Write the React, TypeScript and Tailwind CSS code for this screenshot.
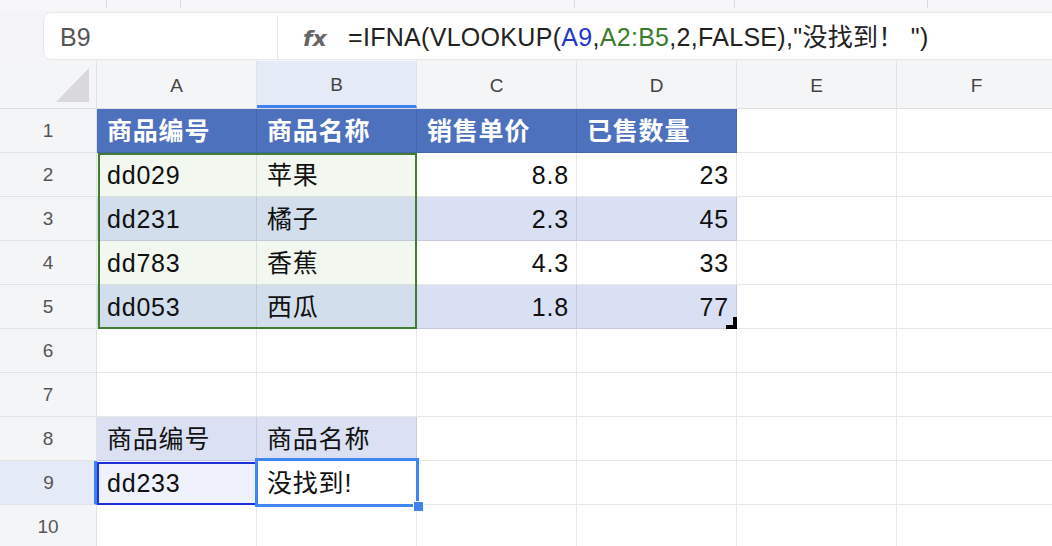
import React from "react";

type Cell = {
  t?: string;
  cls?: string;
  right?: boolean;
};

const FONT = { fontFamily: '"Liberation Sans", "Noto Sans CJK SC", sans-serif' };

const HDR = "bg-[#4e71be] text-white font-bold";
const GREEN = "bg-[#f2f7ef]";
const STEEL = "bg-[#d3deec]";
const LAV = "bg-[#dae0f3]";

const rows: { n: number; cells: Cell[]; sel?: boolean }[] = [
  {
    n: 1,
    cells: [
      { t: "商品编号", cls: HDR },
      { t: "商品名称", cls: HDR },
      { t: "销售单价", cls: HDR },
      { t: "已售数量", cls: HDR },
      {},
      {},
    ],
  },
  {
    n: 2,
    cells: [
      { t: "dd029", cls: GREEN },
      { t: "苹果", cls: GREEN },
      { t: "8.8", right: true },
      { t: "23", right: true },
      {},
      {},
    ],
  },
  {
    n: 3,
    cells: [
      { t: "dd231", cls: STEEL },
      { t: "橘子", cls: STEEL },
      { t: "2.3", right: true, cls: LAV },
      { t: "45", right: true, cls: LAV },
      {},
      {},
    ],
  },
  {
    n: 4,
    cells: [
      { t: "dd783", cls: GREEN },
      { t: "香蕉", cls: GREEN },
      { t: "4.3", right: true },
      { t: "33", right: true },
      {},
      {},
    ],
  },
  {
    n: 5,
    cells: [
      { t: "dd053", cls: STEEL },
      { t: "西瓜", cls: STEEL },
      { t: "1.8", right: true, cls: LAV },
      { t: "77", right: true, cls: LAV },
      {},
      {},
    ],
  },
  { n: 6, cells: [{}, {}, {}, {}, {}, {}] },
  { n: 7, cells: [{}, {}, {}, {}, {}, {}] },
  {
    n: 8,
    cells: [
      { t: "商品编号", cls: "bg-[#dbe1f2]" },
      { t: "商品名称", cls: "bg-[#dbe1f2]" },
      {},
      {},
      {},
      {},
    ],
  },
  {
    n: 9,
    sel: true,
    cells: [{ t: "dd233", cls: "bg-[#eff1fd]" }, { t: "没找到!" }, {}, {}, {}, {}],
  },
  { n: 10, cells: [{}, {}, {}, {}, {}, {}] },
];

const cols = ["A", "B", "C", "D", "E", "F"];
const stripWidths = [107, 74, 394, 160, 193, 200];

export default function App() {
  return (
    <div className="w-[1052px] h-[546px] overflow-hidden bg-white text-[#111]" style={FONT}>
      {/* top strip */}
      <div className="flex h-[10px] bg-[#f7f7f9]">
        {stripWidths.map((w, i) => (
          <div key={i} className="h-[8px] shrink-0 border-r border-[#dcdcdc]" style={{ width: w }} />
        ))}
      </div>
      {/* formula bar */}
      <div className="h-[51px] bg-[#f5f5f7] pl-[43px] pt-[2px]">
        <div className="flex h-[48px] w-[1030px] items-center rounded-[8px] border border-[#e9e9ec] bg-white pt-[4px]">
          <div className="flex h-full w-[234px] items-center border-r border-[#e6e6e8] pl-[16px] text-[25px] text-[#555]">
            B9
          </div>
          <div
            className="ml-[25px] w-[24px] text-[22px] font-bold italic text-[#666]"
            style={{ fontFamily: '"DejaVu Sans", sans-serif' }}
          >
            fx
          </div>
          <div className="ml-[21px] whitespace-nowrap text-[25px] tracking-[0.3px] text-[#222]">
            =IFNA(VLOOKUP(<span className="text-[#2436d0]">A9</span>,
            <span className="text-[#3b7d2c]">A2:B5</span>,2,FALSE),"没找到！ ")
          </div>
        </div>
      </div>
      {/* grid */}
      <div className="relative">
        {/* column header */}
        <div className="flex h-[48px] bg-[#f4f5f7] border-b border-[#dedede]">
          <div className="flex w-[97px] shrink-0 items-end justify-end border-r border-[#e2e2e2] pb-[6px] pr-[7px]">
            <svg width="33" height="34" viewBox="0 0 33 34">
              <polygon points="33,0 33,34 0,34" fill="#d9d9db" />
            </svg>
          </div>
          {cols.map((c) => (
            <div
              key={c}
              className={
                "flex w-[160px] shrink-0 items-center justify-center border-r border-[#e2e2e2] pt-[4px] text-[19px] text-[#444] " +
                (c === "B" ? "bg-[#e5ebf6] border-b-[3px] border-b-[#3d82ee]" : "")
              }
            >
              {c}
            </div>
          ))}
        </div>
        {rows.map((r) => (
          <div key={r.n} className="flex h-[44px]">
            <div
              className={
                "flex w-[97px] shrink-0 items-center justify-center border-b border-r border-[#e2e2e2] pt-[2px] text-[19px] text-[#555] " +
                (r.sel ? "bg-[#e5ebf6] border-r-[3px] border-r-[#3d82ee] pl-[3px]" : "bg-[#f4f5f7]")
              }
            >
              {r.n}
            </div>
            {r.cells.map((c, i) => (
              <div
                key={i}
                className={
                  "flex w-[160px] shrink-0 items-center border-b border-r border-black/[0.09] pt-[2px] text-[25px] tracking-[0.8px] " +
                  (c.right ? "justify-end pr-[7px] " : "pl-[10px] ") +
                  (c.cls ?? "bg-white")
                }
              >
                {c.t}
              </div>
            ))}
          </div>
        ))}
        {/* A2:B5 green range outline */}
        <div className="pointer-events-none absolute left-[98px] top-[92px] h-[176px] w-[319px] border-2 border-[#3f7d32]" />
        {/* D5 fill corner */}
        <div className="pointer-events-none absolute left-[726px] top-[256px] h-[12px] w-[11px]">
          <div className="ml-[7px] h-[8px] w-[4px] bg-black" />
          <div className="h-[4px] w-[11px] bg-black" />
        </div>
        {/* A9 outline */}
        <div className="pointer-events-none absolute left-[97px] top-[401px] h-[43px] w-[160px] border-2 border-[#1f30d6]" />
        {/* B9 active cell */}
        <div className="pointer-events-none absolute left-[255px] top-[397px] h-[49px] w-[164px] border-[3px] border-[#3f86f0]">
          <div className="absolute -bottom-[8px] -right-[8px] h-[11px] w-[11px] border border-white bg-[#3f86f0]" />
        </div>
      </div>
    </div>
  );
}
